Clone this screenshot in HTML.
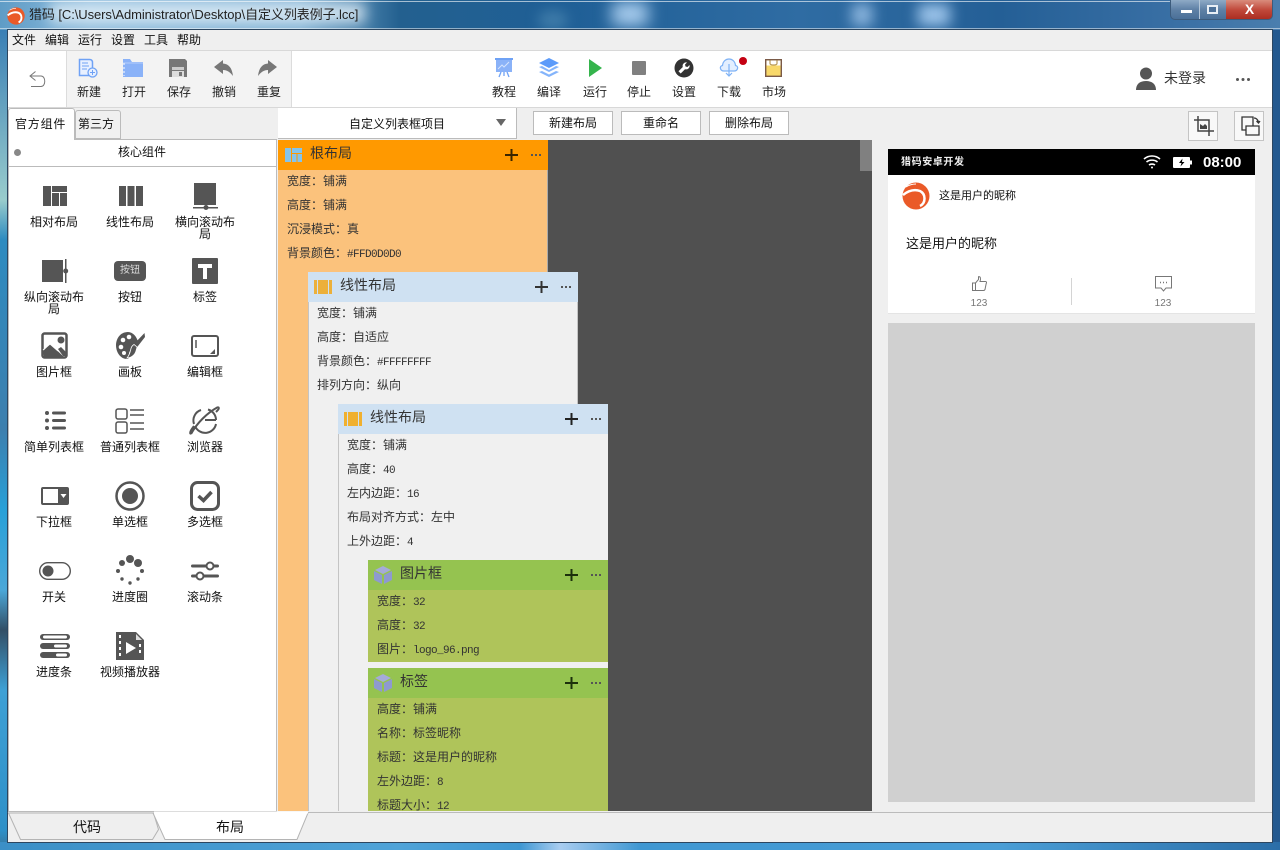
<!DOCTYPE html>
<html lang="zh"><head><meta charset="utf-8"><title>猎码</title>
<style>
*{box-sizing:border-box}
html,body{margin:0;padding:0;width:1280px;height:850px;overflow:hidden;background:#2b6a9f}
body{position:relative;font-family:"Liberation Sans","WenQuanYi Zen Hei","Noto Sans CJK SC",sans-serif;font-size:12px;color:#222}
.a{position:absolute}
.t{position:absolute;white-space:nowrap;line-height:16px;height:16px}
.c{position:absolute;width:120px;text-align:center;white-space:nowrap;line-height:16px;height:16px;transform:translateX(-60px)}
.i{position:absolute;overflow:visible}
.p{position:absolute;white-space:nowrap;line-height:16px;height:16px;color:#333}
.p b{font:normal 11px/16px "Liberation Mono",monospace;letter-spacing:-.6px;color:#333}
.h{position:absolute;height:30px}
.h span{position:absolute;top:4px;font-size:14px;line-height:18px;color:#333;white-space:nowrap}
.btn{position:absolute;top:111px;height:24px;width:80px;background:#fff;border:1px solid #bbb;text-align:center;line-height:22px;color:#111}
.ib{position:absolute;top:111px;width:30px;height:30px;background:#f8f8f8;border:1px solid #c4c4c4}
</style></head><body>

<!-- window chrome -->
<div class="a" style="left:0;top:0;width:1280px;height:30px;background:linear-gradient(90deg,#5f9cc6 0,#8dbbdc 90px,#7fb0d3 300px,#23608f 400px,#1f5f96 560px,#2f6ca3 800px,#245f96 1000px,#3a70a5 1180px,#4a7eae 1280px)"></div>
<div class="a" style="left:612px;top:2px;width:36px;height:24px;background:#a9cdee;filter:blur(8px)"></div>
<div class="a" style="left:538px;top:10px;width:30px;height:20px;background:#3d7aa8;border-radius:50%;filter:blur(6px)"></div>
<div class="a" style="left:852px;top:4px;width:20px;height:22px;background:#8fb8e0;filter:blur(7px)"></div>
<div class="a" style="left:918px;top:4px;width:32px;height:22px;background:#9cc4ea;filter:blur(7px)"></div>
<div class="a" style="left:50px;top:3px;width:315px;height:20px;background:#e4f0f8;filter:blur(7px);opacity:.85"></div>
<div class="a" style="left:0;top:1px;width:1170px;height:1px;background:rgba(255,255,255,.6)"></div>
<div class="a" style="left:0;top:28px;width:1280px;height:1px;background:rgba(255,255,255,.5)"></div>
<div class="a" style="left:0;top:30px;width:8px;height:812px;background:linear-gradient(180deg,#3a7fb5 0,#9cc 170px,#2d8bc0 210px,#3d7fae 400px,#27a0d8 480px,#4ba7d8 560px,#334f66 600px,#3ea0d5 660px,#2e90c8 800px,#456 842px)"></div>
<div class="a" style="left:1272px;top:30px;width:8px;height:812px;background:#24598f"></div>
<div class="a" style="left:0;top:842px;width:1280px;height:8px;background:linear-gradient(90deg,#3b8fc6 0,#4fa3d8 400px,#3f97d2 520px,#a9cdf0 560px,#3f97d2 640px,#4a9ed6 1000px,#2b6ea8 1280px)"></div>
<div class="a" style="left:7px;top:29px;width:1266px;height:814px;border:1px solid #2c4660;background:#efefef"></div>
<svg class="i" style="left:7px;top:7px" width="18" height="18" viewBox="0 0 28 28"><circle cx="14" cy="14" r="13.500" fill="#ea5a28"/><path d="M1 13C6 9 12 7 18 9c6 3 6 12 0 15" fill="none" stroke="#fff" stroke-width="3"/><path d="M4 5c3-2 7-3 10-3" stroke="#fff" fill="none"/></svg>
<div class="t" style="left:29px;top:7px;color:#222;font-size:13px;letter-spacing:-.08px">猎码 [C:\Users\Administrator\Desktop\自定义列表例子.lcc]</div>

<!-- caption buttons -->
<div class="a" style="left:1170px;top:0;width:103px;height:20px;border:1px solid #3c5b7c;border-top:0;border-radius:0 0 5px 5px;overflow:hidden;background:linear-gradient(180deg,#8faac6,#5f81a6 50%,#4a7098)">
<div class="a" style="left:28px;top:0;width:1px;height:20px;background:#b3c6d8"></div>
<div class="a" style="left:55px;top:0;width:47px;height:20px;background:linear-gradient(180deg,#d98c7c,#c0483a 50%,#a92a1f)"></div>
<div class="a" style="left:10px;top:10px;width:11px;height:3px;background:#fff"></div>
<div class="a" style="left:36px;top:5px;width:11px;height:9px;border:2px solid #e8eef5;background:#4d7199"></div>
<div class="a" style="left:55px;top:0;width:47px;height:19px;text-align:center;color:#fff;font:bold 14px/18px 'Liberation Sans',sans-serif">X</div>
</div>

<!-- menu -->
<div class="a" style="left:8px;top:30px;width:1264px;height:21px;background:#efefef;border-bottom:1px solid #d8d8d8"></div>
<div class="t" style="left:12px;top:32px;color:#111">文件</div><div class="t" style="left:45px;top:32px;color:#111">编辑</div><div class="t" style="left:78px;top:32px;color:#111">运行</div><div class="t" style="left:111px;top:32px;color:#111">设置</div><div class="t" style="left:144px;top:32px;color:#111">工具</div><div class="t" style="left:177px;top:32px;color:#111">帮助</div>

<!-- toolbar -->
<div class="a" style="left:8px;top:51px;width:1264px;height:57px;background:#fff;border-bottom:1px solid #d8d8d8"></div>
<div class="a" style="left:66px;top:51px;width:226px;height:56px;background:#f3f3f3;border-left:1px solid #dcdcdc;border-right:1px solid #dcdcdc"></div>
<svg class="i" style="left:29px;top:71px" width="17" height="17" viewBox="0 0 17 17" fill="none" stroke="#777"><path d="M6.500.5 1 5l5.500 4.500M1 5h11c5 0 5 10.500 0 10.500H2"/></svg>

<svg class="i" style="left:78px;top:58px" width="20" height="20" viewBox="0 0 20 20"><path d="M1.500 1.500h10c2 0 3 1 3 3v13h-13z" fill="#e8f0ff" stroke="#6fa2f5" stroke-width="1.500"/><path d="M4 5h6M4 8h7M4 11h5" stroke="#6fa2f5"/><circle cx="14.500" cy="14.500" r="4.500" fill="#e8f0ff" stroke="#6fa2f5" stroke-width="1.300"/><path d="M12 14.500h5M14.500 12v5" stroke="#6fa2f5"/></svg>
<svg class="i" style="left:123px;top:59px" width="20" height="18" viewBox="0 0 20 18"><path d="M0 0h7l2 3h11v15H0z" fill="#8ab2f8"/><path d="M0 4h20" stroke="#b7cffa"/><path d="M1 4v13" stroke="#fff" stroke-dasharray="2 2"/></svg>
<svg class="i" style="left:169px;top:59px" width="18" height="18" viewBox="0 0 18 18"><path d="M0 0h16l2 2v16H0z" fill="#777"/><rect x="3" y="8" width="12" height="3" fill="#ccc"/><rect x="3" y="12" width="12" height="6" fill="#ddd"/><rect x="10" y="13" width="3" height="4" fill="#777"/></svg>
<svg class="i" style="left:214px;top:60px" width="19" height="16" viewBox="0 0 19 16"><path d="M9 0 0 7l9 7v-4c4 0 7 2 10 6C18 8 15 4 9 3.500z" fill="#777"/></svg>
<svg class="i" style="left:258px;top:60px" width="19" height="16" viewBox="0 0 19 16"><path d="M10 0l9 7-9 7v-4c-4 0-7 2-10 6C1 8 4 4 10 3.500z" fill="#777"/></svg>
<div class="c" style="left:89px;top:84px">新建</div><div class="c" style="left:134px;top:84px">打开</div><div class="c" style="left:179px;top:84px">保存</div><div class="c" style="left:224px;top:84px">撤销</div><div class="c" style="left:269px;top:84px">重复</div>

<svg class="i" style="left:495px;top:58px" width="18" height="19" viewBox="0 0 18 19"><rect x="0" y="0" width="18" height="2" fill="#6fa2f5"/><rect x="1" y="2" width="16" height="12" fill="#8ab2f8"/><path d="M3 11l4-4 2 2 5-5" stroke="#d5e3fd" fill="none"/><path d="M6 14l-2 5M12 14l2 5M9 14v4" stroke="#6fa2f5" stroke-width="1.300"/></svg>
<svg class="i" style="left:539px;top:58px" width="20" height="19" viewBox="0 0 20 19"><path d="M10 0l10 5-10 5L0 5z" fill="#5c9bfa"/><path d="M0 9l3-1 7 4 7-4 3 1-10 5z" fill="#84b4fb"/><path d="M0 14l3-1 7 3.500 7-3.500 3 1-10 5z" fill="#84b4fb"/></svg>
<svg class="i" style="left:588px;top:59px" width="15" height="18" viewBox="0 0 15 18"><path d="M1 0l13 9L1 18z" fill="#35b44c"/></svg>
<div class="a" style="left:632px;top:61px;width:14px;height:14px;background:#808080;border-radius:1px"></div>
<svg class="i" style="left:674px;top:58px" width="20" height="20" viewBox="0 0 20 20"><circle cx="10" cy="10" r="9.500" fill="#333"/><path d="M13 4.500a3.500 3.500 0 0 0-4.200 4.500L4.500 13.300l2.200 2.200L11 11.200a3.500 3.500 0 0 0 4.500-4.200L13.500 9l-2-.5-.5-2z" fill="#fff"/></svg>
<svg class="i" style="left:719px;top:58px" width="20" height="20" viewBox="0 0 20 20"><path d="M5 13C1 13 0 8 3.500 7.500 4 3 7 1 10 1s6 2 6.500 6.500C20 8 19 13 15 13z" fill="#e3efff" stroke="#7fb2f5" stroke-width="1.200"/><path d="M10 6v12M7 15l3 3 3-3" stroke="#7fb2f5" fill="none" stroke-width="1.200"/></svg>
<div class="a" style="left:739px;top:57px;width:8px;height:8px;border-radius:50%;background:#c40012"></div>
<svg class="i" style="left:765px;top:59px" width="18" height="18" viewBox="0 0 18 18"><rect x=".7" y=".7" width="15.600" height="16.600" fill="#f8d86a" stroke="#7a5a48" stroke-width="1.400"/><rect x="1.500" y="1.500" width="14" height="5" fill="#fff"/><path d="M5 1.500v3c0 2 7 2 7 0v-3" fill="none" stroke="#b89a5a" stroke-width="1.200"/></svg>
<div class="c" style="left:504px;top:84px">教程</div><div class="c" style="left:549px;top:84px">编译</div><div class="c" style="left:595px;top:84px">运行</div><div class="c" style="left:639px;top:84px">停止</div><div class="c" style="left:684px;top:84px">设置</div><div class="c" style="left:729px;top:84px">下载</div><div class="c" style="left:774px;top:84px">市场</div>

<svg class="i" style="left:1135px;top:67px" width="22" height="24" viewBox="0 0 22 24"><circle cx="11" cy="6.500" r="6" fill="#555"/><path d="M1 23c0-6 4-9 10-9s10 3 10 9z" fill="#555"/></svg>
<div class="t" style="left:1164px;top:69px;font-size:14px;line-height:18px;height:18px;color:#333">未登录</div>
<div class="a" style="left:1236px;top:78px;width:3px;height:3px;border-radius:50%;background:#555;box-shadow:5.500px 0 #555,11px 0 #555"></div>

<!-- row 2 -->
<div class="a" style="left:8px;top:108px;width:1264px;height:31px;background:#efefef"></div>
<div class="a" style="left:75px;top:110px;width:46px;height:29px;background:#f0f0f0;border:1px solid #bbb;border-radius:3px 3px 0 0"></div>
<div class="a" style="left:8px;top:108px;width:67px;height:32px;background:#fff;border:1px solid #bbb;border-bottom:0;border-radius:3px 3px 0 0;z-index:2"></div>
<div class="t" style="left:15px;top:116px;z-index:3;color:#111;letter-spacing:.8px">官方组件</div>
<div class="t" style="left:78px;top:116px;color:#111">第三方</div>
<div class="a" style="left:278px;top:108px;width:239px;height:31px;background:#fff;border-right:1px solid #bbb;border-bottom:1px solid #bbb"></div>
<div class="c" style="left:397px;top:116px;color:#111">自定义列表框项目</div>
<div class="a" style="left:496px;top:119px;border-left:5px solid transparent;border-right:5px solid transparent;border-top:7px solid #666"></div>
<div class="btn" style="left:533px">新建布局</div><div class="btn" style="left:621px">重命名</div><div class="btn" style="left:709px">删除布局</div>
<div class="ib" style="left:1188px"><svg class="i" style="left:5px;top:4px" width="20" height="20" viewBox="0 0 20 20" fill="none" stroke="#444" stroke-width="1.500"><path d="M4 0v15h16M0 4h15v16"/><path d="M6 13V8l3 2 2-2 2 2v3z" fill="#444" stroke="none"/></svg></div>
<div class="ib" style="left:1234px"><svg class="i" style="left:6px;top:4px" width="19" height="20" viewBox="0 0 19 20" fill="none" stroke="#333" stroke-width="1.300"><path d="M1 1h11v13H1z"/><path d="M5 10h13v9H5z" fill="#f8f8f8"/><path d="M13 2c2 0 3.500 1 4.500 4M15.500 5l2 2 1.500-2"/></svg></div>

<!-- left panel -->
<div class="a" style="left:8px;top:139px;width:269px;height:673px;background:#fff;border:1px solid #bbb"></div>
<div class="a" style="left:9px;top:166px;width:267px;height:1px;background:#bbb"></div>
<div class="a" style="left:14px;top:149px;width:7px;height:7px;border-radius:50%;background:#888"></div>
<div class="c" style="left:142px;top:144px;color:#111">核心组件</div>

<!-- palette icons -->
<svg class="i" style="left:43px;top:186px" width="24" height="20" viewBox="0 0 24 20" fill="#555"><rect width="8" height="20"/><rect x="9" width="15" height="6"/><rect x="9" y="7" width="7" height="13"/><rect x="17" y="7" width="7" height="13"/></svg>
<svg class="i" style="left:119px;top:186px" width="24" height="20" viewBox="0 0 24 20" fill="#555"><rect width="7" height="20"/><rect x="8.500" width="7" height="20"/><rect x="17" width="7" height="20"/></svg>
<svg class="i" style="left:193px;top:183px" width="26" height="27" viewBox="0 0 26 27" fill="#555"><rect x="1" width="22" height="22"/><rect y="24" width="25" height="1.500"/><circle cx="13" cy="24.500" r="2.500"/></svg>
<svg class="i" style="left:41px;top:259px" width="27" height="24" viewBox="0 0 27 24" fill="#555"><rect x="1" y="1" width="21" height="22"/><rect x="24" y="0" width="1.500" height="24"/><circle cx="24.700" cy="12" r="2.500"/></svg>
<div class="a" style="left:114px;top:261px;width:32px;height:20px;background:#555;border-radius:4px;color:#ddd;text-align:center;font-size:10px;line-height:20px">按钮</div>
<svg class="i" style="left:192px;top:258px" width="26" height="26" viewBox="0 0 26 26"><rect width="26" height="26" rx="1" fill="#555"/><path d="M6 6h14v4h-5v11h-4V10H6z" fill="#fff"/></svg>
<svg class="i" style="left:41px;top:332px" width="28" height="27" viewBox="0 0 28 27"><rect x="1.500" y="1.500" width="24" height="24" rx="2" fill="#fff" stroke="#555" stroke-width="2.500"/><circle cx="20" cy="8" r="3.500" fill="#555"/><path d="M2 19l7-7 14 13H3zM17 17l3-2 5 5v4h-3z" fill="#555"/><path d="M2 18l7-6 8 7" fill="none" stroke="#fff"/></svg>
<svg class="i" style="left:116px;top:331px" width="29" height="30" viewBox="0 0 29 30"><path d="M12 1C4 1 0 8 0 14c0 8 5 14 11 14 3 0 2-3 2-5 0-3 2-4 5-5 3-1 5-3 4-7C21 6 17 1 12 1z" fill="#555"/><circle cx="7" cy="9" r="2.300" fill="#fff"/><circle cx="13" cy="6" r="2.300" fill="#fff"/><circle cx="5" cy="16" r="2.300" fill="#fff"/><circle cx="8" cy="22" r="2" fill="#fff"/><path d="M28.500 2 19 12l3 3 7-9z" fill="#555"/><path d="M18 13.500c-2 1-3 3-3.500 6-.5 2-1.500 5-3.500 7.500 4 0 8-3 9-7 .5-2 1-3 1-4z" fill="#555" stroke="#fff" stroke-width=".8"/></svg>
<svg class="i" style="left:191px;top:335px" width="28" height="22" viewBox="0 0 28 22" fill="none"><rect x="1" y="1" width="26" height="20" rx="2" stroke="#555" stroke-width="2"/><path d="M5 5v8" stroke="#555" stroke-width="1.500"/><path d="M24 14v5h-5z" fill="#555"/></svg>

<svg class="i" style="left:44px;top:410px" width="22" height="21" viewBox="0 0 22 21" fill="#555"><circle cx="3" cy="3" r="2"/><circle cx="3" cy="10.500" r="2"/><circle cx="3" cy="18" r="2"/><rect x="8" y="1.500" width="14" height="3" rx="1.500"/><rect x="8" y="9" width="14" height="3" rx="1.500"/><rect x="8" y="16.500" width="14" height="3" rx="1.500"/></svg>
<svg class="i" style="left:115px;top:408px" width="30" height="26" viewBox="0 0 30 26" fill="none" stroke="#555" stroke-width="1.500"><rect x="1" y="1" width="11" height="10" rx="2"/><rect x="1" y="14" width="11" height="11" rx="2"/><path d="M15 2h14M15 7h14M15 15h14M15 21h14"/></svg>
<svg class="i" style="left:189px;top:405px" width="31" height="30" viewBox="0 0 31 30" fill="none" stroke="#555" stroke-width="2"><path d="M2 29C8 18 18 8 29 2"/><path d="M2 29c-2-1 0-4 3-8"/><path d="M29 2c2 1 0 3-2 5"/><path d="M5 19A11 11 0 0 1 12 5M19 4.500A11 11 0 0 1 27 15"/><path d="M6 21A11 11 0 0 0 27 19"/><path d="M16 15h11"/></svg>

<svg class="i" style="left:41px;top:487px" width="28" height="18" viewBox="0 0 28 18"><rect x="1" y="1" width="26" height="16" rx="1" fill="#fff" stroke="#555" stroke-width="2"/><rect x="17" y="1" width="10" height="16" fill="#555"/><path d="M19.500 7h6l-3 4z" fill="#fff"/></svg>
<svg class="i" style="left:115px;top:481px" width="30" height="30" viewBox="0 0 30 30"><circle cx="15" cy="15" r="13.500" fill="none" stroke="#555" stroke-width="2.500"/><circle cx="15" cy="15" r="8" fill="#555"/></svg>
<svg class="i" style="left:190px;top:481px" width="30" height="30" viewBox="0 0 30 30" fill="none" stroke="#555"><rect x="1.500" y="1.500" width="27" height="27" rx="6" stroke-width="3"/><path d="M8.500 15l5 4.500 8-8.500" stroke-width="3.500"/></svg>
<svg class="i" style="left:39px;top:562px" width="32" height="18" viewBox="0 0 32 18"><rect x=".7" y=".7" width="30.600" height="16.600" rx="8.300" fill="#fff" stroke="#555" stroke-width="1.400"/><circle cx="9" cy="9" r="5.500" fill="#555"/></svg>
<svg class="i" style="left:116px;top:555px" width="28" height="30" viewBox="0 0 28 30" fill="#555"><circle cx="14" cy="4" r="4"/><circle cx="22" cy="8" r="4"/><circle cx="6" cy="8" r="3"/><circle cx="2" cy="16" r="2"/><circle cx="26" cy="16" r="2"/><circle cx="6" cy="24" r="1.700"/><circle cx="22" cy="24" r="1.700"/><circle cx="14" cy="28" r="1.700"/></svg>
<svg class="i" style="left:191px;top:561px" width="28" height="20" viewBox="0 0 28 20"><rect y="3.500" width="28" height="3" rx="1.500" fill="#555"/><rect y="13.500" width="28" height="3" rx="1.500" fill="#555"/><circle cx="19" cy="5" r="3.500" fill="#fff" stroke="#555" stroke-width="2"/><circle cx="9" cy="15" r="3.500" fill="#fff" stroke="#555" stroke-width="2"/></svg>
<svg class="i" style="left:40px;top:634px" width="30" height="24" viewBox="0 0 30 24"><rect width="30" height="6" rx="3" fill="#555"/><rect x="3" y="1.500" width="24" height="3" rx="1.500" fill="#fff"/><rect y="9" width="30" height="6" rx="3" fill="#555"/><rect x="14" y="10.500" width="13" height="3" rx="1.500" fill="#fff"/><rect y="18" width="30" height="6" rx="3" fill="#555"/><rect x="16" y="19.500" width="11" height="3" rx="1.500" fill="#fff"/></svg>
<svg class="i" style="left:116px;top:632px" width="28" height="28" viewBox="0 0 28 28"><path d="M0 0h20l8 8v20H0z" fill="#555"/><path d="M20 2l6 6h-6z" fill="#ddd"/><path d="M10 10l10 6-10 6z" fill="#fff"/><path d="M3 3h2v3H3zM3 9h2v3H3zM3 15h2v3H3zM3 21h2v3H3zM23 12h2v3h-2zM23 18h2v3h-2z" fill="#fff"/></svg>

<div class="c" style="left:54px;top:214px;color:#111">相对布局</div><div class="c" style="left:130px;top:214px;color:#111">线性布局</div><div class="c" style="left:205px;top:214px;color:#111">横向滚动布</div><div class="c" style="left:205px;top:226px;color:#111">局</div>
<div class="c" style="left:54px;top:289px;color:#111">纵向滚动布</div><div class="c" style="left:54px;top:301px;color:#111">局</div><div class="c" style="left:130px;top:289px;color:#111">按钮</div><div class="c" style="left:205px;top:289px;color:#111">标签</div>
<div class="c" style="left:54px;top:364px;color:#111">图片框</div><div class="c" style="left:130px;top:364px;color:#111">画板</div><div class="c" style="left:205px;top:364px;color:#111">编辑框</div>
<div class="c" style="left:54px;top:439px;color:#111">简单列表框</div><div class="c" style="left:130px;top:439px;color:#111">普通列表框</div><div class="c" style="left:205px;top:439px;color:#111">浏览器</div>
<div class="c" style="left:54px;top:514px;color:#111">下拉框</div><div class="c" style="left:130px;top:514px;color:#111">单选框</div><div class="c" style="left:205px;top:514px;color:#111">多选框</div>
<div class="c" style="left:54px;top:589px;color:#111">开关</div><div class="c" style="left:130px;top:589px;color:#111">进度圈</div><div class="c" style="left:205px;top:589px;color:#111">滚动条</div>
<div class="c" style="left:54px;top:664px;color:#111">进度条</div><div class="c" style="left:130px;top:664px;color:#111">视频播放器</div>

<!-- editor -->
<div class="a" style="left:278px;top:140px;width:594px;height:671px;background:#505050"></div>
<div class="a" style="left:860px;top:140px;width:12px;height:31px;background:#808080"></div>
<div class="a" style="left:278px;top:170px;width:270px;height:641px;background:#fbc27c;border-right:1px solid #aaa"></div>
<div class="h" style="left:278px;top:140px;width:270px;background:#f90"><svg class="i" style="left:7px;top:8px" width="17" height="14" viewBox="0 0 17 14" fill="#85c4ea"><rect width="6" height="14"/><rect x="7" width="10" height="5"/><rect x="7" y="6" width="4.500" height="8"/><rect x="12.500" y="6" width="4.500" height="8"/></svg><span style="left:32px">根布局</span></div>

<div class="a" style="left:308px;top:302px;width:270px;height:509px;background:#f0f0f0;border-left:1px solid #c4c4c4;border-right:1px solid #c4c4c4"></div>
<div class="h" style="left:308px;top:272px;width:270px;background:#cfe1f2"><svg class="i" style="left:6px;top:8px" width="18" height="14" viewBox="0 0 18 14" fill="#ecb03a"><rect width="3" height="14"/><rect x="4" width="10" height="14"/><rect x="15" width="3" height="14"/></svg><span style="left:32px">线性布局</span></div>

<div class="a" style="left:338px;top:434px;width:270px;height:377px;background:#f0f0f0;border-left:1px solid #c4c4c4"></div>
<div class="h" style="left:338px;top:404px;width:270px;background:#cfe1f2"><svg class="i" style="left:6px;top:8px" width="18" height="14" viewBox="0 0 18 14" fill="#f0b02f"><rect width="3" height="14"/><rect x="4" width="10" height="14"/><rect x="15" width="3" height="14"/></svg><span style="left:32px">线性布局</span></div>

<div class="a" style="left:368px;top:590px;width:240px;height:72px;background:#afc45a"></div>
<div class="h" style="left:368px;top:560px;width:240px;background:#95c350"><svg class="i" style="left:6px;top:6px" width="18" height="18" viewBox="0 0 18 18"><path d="M9 0l8 4-8 4-8-4z" fill="#a5abd8"/><path d="M0 5l8 4v9l-8-4zM18 5l-8 4v9l8-4z" fill="#8e9ad0"/></svg><span style="left:32px">图片框</span></div>

<div class="a" style="left:368px;top:698px;width:240px;height:113px;background:#afc45a"></div>
<div class="h" style="left:368px;top:668px;width:240px;background:#95c350"><svg class="i" style="left:6px;top:6px" width="18" height="18" viewBox="0 0 18 18"><path d="M9 0l8 4-8 4-8-4z" fill="#a5abd8"/><path d="M0 5l8 4v9l-8-4zM18 5l-8 4v9l8-4z" fill="#8e9ad0"/></svg><span style="left:32px">标签</span></div>

<!-- plus / more -->
<svg class="i" style="left:505px;top:148px" width="14" height="14" viewBox="0 0 14 14" stroke="#3a2500" stroke-width="2"><path d="M0 7h13M6.500 1v12"/></svg>
<div class="a" style="left:531px;top:154px;width:2px;height:2px;background:#555;box-shadow:4px 0 #555,8px 0 #555"></div>
<svg class="i" style="left:535px;top:280px" width="14" height="14" viewBox="0 0 14 14" stroke="#333" stroke-width="2"><path d="M0 7h13M6.500 1v12"/></svg>
<div class="a" style="left:561px;top:286px;width:2px;height:2px;background:#555;box-shadow:4px 0 #555,8px 0 #555"></div>
<svg class="i" style="left:565px;top:412px" width="14" height="14" viewBox="0 0 14 14" stroke="#222" stroke-width="2"><path d="M0 7h13M6.500 1v12"/></svg>
<div class="a" style="left:591px;top:418px;width:2px;height:2px;background:#555;box-shadow:4px 0 #555,8px 0 #555"></div>
<svg class="i" style="left:565px;top:568px" width="14" height="14" viewBox="0 0 14 14" stroke="#1c300c" stroke-width="2"><path d="M0 7h13M6.500 1v12"/></svg>
<div class="a" style="left:591px;top:574px;width:2px;height:2px;background:#555;box-shadow:4px 0 #555,8px 0 #555"></div>
<svg class="i" style="left:565px;top:676px" width="14" height="14" viewBox="0 0 14 14" stroke="#1c300c" stroke-width="2"><path d="M0 7h13M6.500 1v12"/></svg>
<div class="a" style="left:591px;top:682px;width:2px;height:2px;background:#555;box-shadow:4px 0 #555,8px 0 #555"></div>

<!-- properties -->
<div class="p" style="left:287px;top:173px">宽度：铺满</div>
<div class="p" style="left:287px;top:197px">高度：铺满</div>
<div class="p" style="left:287px;top:221px">沉浸模式：真</div>
<div class="p" style="left:287px;top:245px">背景颜色：<b>#FFD0D0D0</b></div>
<div class="p" style="left:317px;top:305px">宽度：铺满</div>
<div class="p" style="left:317px;top:329px">高度：自适应</div>
<div class="p" style="left:317px;top:353px">背景颜色：<b>#FFFFFFFF</b></div>
<div class="p" style="left:317px;top:377px">排列方向：纵向</div>
<div class="p" style="left:347px;top:437px">宽度：铺满</div>
<div class="p" style="left:347px;top:461px">高度：<b>40</b></div>
<div class="p" style="left:347px;top:485px">左内边距：<b>16</b></div>
<div class="p" style="left:347px;top:509px">布局对齐方式：左中</div>
<div class="p" style="left:347px;top:533px">上外边距：<b>4</b></div>
<div class="p" style="left:377px;top:593px">宽度：<b>32</b></div>
<div class="p" style="left:377px;top:617px">高度：<b>32</b></div>
<div class="p" style="left:377px;top:641px">图片：<b>logo_96.png</b></div>
<div class="p" style="left:377px;top:701px">高度：铺满</div>
<div class="p" style="left:377px;top:725px">名称：标签昵称</div>
<div class="p" style="left:377px;top:749px">标题：这是用户的昵称</div>
<div class="p" style="left:377px;top:773px">左外边距：<b>8</b></div>
<div class="p" style="left:377px;top:797px;height:14px;overflow:hidden">标题大小：<b>12</b></div>

<!-- preview -->
<div class="a" style="left:888px;top:149px;width:367px;height:26px;background:#000"></div>
<div class="t" style="left:901px;top:155px;color:#eee;font-size:10px;font-weight:bold;letter-spacing:.6px">猎码安卓开发</div>
<svg class="i" style="left:1143px;top:154px" width="18" height="15" viewBox="0 0 18 15" fill="none" stroke="#fff" stroke-width="1.600"><path d="M1 5c4.500-4 11.500-4 16 0M3.500 8c3-2.500 8-2.500 11 0M6 11c1.700-1.300 4.300-1.300 6 0"/><circle cx="9" cy="13.500" r="1" fill="#fff" stroke="none"/></svg>
<svg class="i" style="left:1173px;top:157px" width="19" height="11" viewBox="0 0 19 11"><rect width="17" height="11" rx="1" fill="#fff"/><rect x="17" y="3.500" width="2" height="4" fill="#fff"/><path d="M9.500 1.500 6 6h2.500l-1 3.500L11.500 5H9z" fill="#000"/></svg>
<div class="t" style="left:1203px;top:154px;color:#fff;font-size:15px;font-weight:bold;line-height:17px;height:17px">08:00</div>
<div class="a" style="left:888px;top:175px;width:367px;height:138px;background:#fff"></div>
<svg class="i" style="left:902px;top:182px" width="28" height="28" viewBox="0 0 28 28"><circle cx="14" cy="14" r="13.500" fill="#ea5a28"/><path d="M1 13C6 9 12 7 18 9c6 3 6 12 0 15" fill="none" stroke="#fff" stroke-width="2.500"/><path d="M4 5c3-2 7-3 10-3" stroke="#fff" fill="none"/></svg>
<div class="t" style="left:939px;top:188px;font-size:11px;color:#111">这是用户的昵称</div>
<div class="t" style="left:906px;top:236px;font-size:13px;color:#111">这是用户的昵称</div>
<div class="a" style="left:1071px;top:278px;width:1px;height:27px;background:#d4d4d4"></div>
<svg class="i" style="left:972px;top:276px" width="15" height="15" viewBox="0 0 15 15" fill="none" stroke="#777"><path d="M.5 7h3v7.500h-3zM3.500 7l3-3.500V.7c2-.4 2.500 2 1.500 4.800h5.500c1.200 0 1.200 1.500.7 2L13 13.500c-.3.700-.7 1-1.500 1h-8"/></svg>
<svg class="i" style="left:1155px;top:276px" width="17" height="16" viewBox="0 0 17 16" fill="none" stroke="#777"><path d="M.5.500h16v11.500H11L8.500 15 6 12H.5z"/><path d="M5 6.500h1M8 6.500h1M11 6.500h1" stroke-width="1.500"/></svg>
<div class="c" style="left:979px;top:296px;font-size:10px;color:#777">123</div>
<div class="c" style="left:1163px;top:296px;font-size:10px;color:#777">123</div>
<div class="a" style="left:888px;top:313px;width:367px;height:1px;background:#e4e4e4"></div>
<div class="a" style="left:888px;top:323px;width:367px;height:479px;background:#d0d0d0"></div>

<!-- bottom tabs -->
<div class="a" style="left:8px;top:812px;width:1264px;height:30px;background:#efefef"></div>
<div class="a" style="left:300px;top:812px;width:972px;height:1px;background:#bbb"></div>
<svg class="i" style="left:8px;top:812px" width="310" height="30" viewBox="0 0 310 30"><path d="M.5 1l12 26.500h132l6-10-5-16.500z" fill="#efefef" stroke="#b4b4b4"/><path d="M145 1l12 26.500h132L300 1z" fill="#fff" stroke="#b4b4b4"/><path d="M146 0.500h154" stroke="#fff" stroke-width="2"/></svg>
<div class="c" style="left:87px;top:818px;font-size:14px;line-height:18px;height:18px;color:#111">代码</div>
<div class="c" style="left:230px;top:818px;font-size:14px;line-height:18px;height:18px;color:#111">布局</div>
</body></html>
